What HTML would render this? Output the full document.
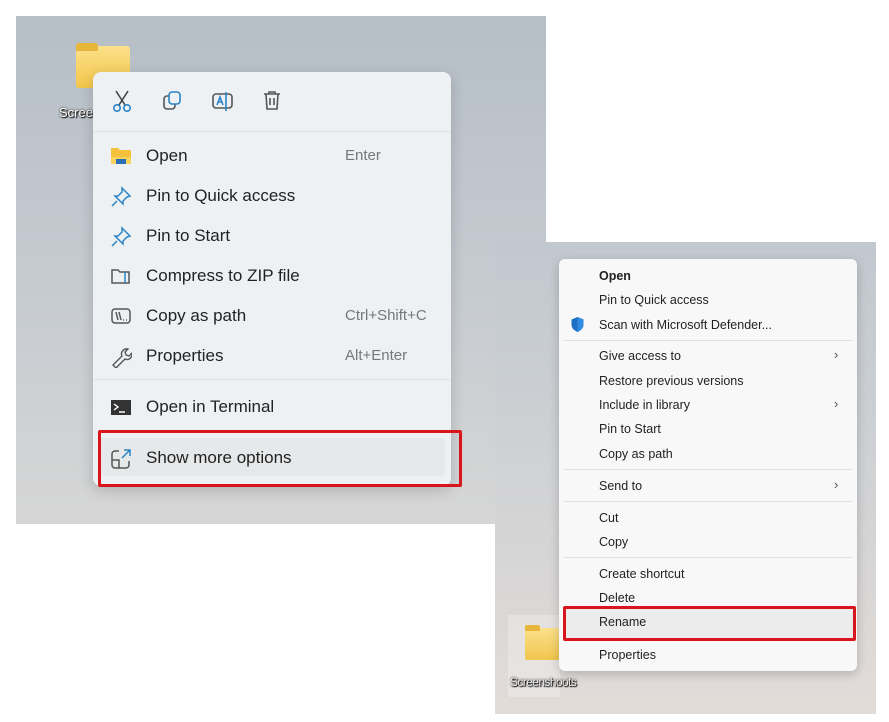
<!DOCTYPE html>
<html><head><meta charset="utf-8"><style>
*{margin:0;padding:0;box-sizing:border-box}
body{width:889px;height:722px;background:#fff;position:relative;overflow:hidden;font-family:"Liberation Sans",sans-serif}
.abs{position:absolute}
#img1{left:16px;top:16px;width:530px;height:508px;background:linear-gradient(180deg,#b6bec6 0%,#c3c9cf 45%,#d6d6d6 100%)}
#m1{left:93px;top:72px;width:358px;height:414px;background:#eef1f4;border-radius:8px;box-shadow:0 4px 14px rgba(0,0,0,.18)}
.r1{position:absolute;left:0;width:358px;height:30px;font-size:17px;color:#222;line-height:30px}
.r1 .t{position:absolute;left:53px}
.r1 .k{position:absolute;left:252px;color:#777;font-size:15px}
.r1 svg{position:absolute;left:17px;top:5px}
#img2{left:495px;top:242px;width:381px;height:472px;background:linear-gradient(180deg,#c1c8cf 0%,#cdd0d3 40%,#e2dcd8 100%)}
#m2{left:559px;top:259px;width:298px;height:412px;background:#f8f8f8;border-radius:6px;box-shadow:0 3px 10px rgba(0,0,0,.2)}
.r2{position:absolute;left:40px;font-size:12.5px;color:#222;line-height:16px}
.ar{position:absolute;left:275px;font-size:13px;color:#555}
.sep{position:absolute;height:1px;background:#e2e2e2}
.red{position:absolute;border:3px solid #d8141c;border-radius:2px}
</style></head><body>
<div id="img1" class="abs">
  <div class="abs" style="left:60px;top:30px;width:54px;height:42px;background:linear-gradient(#fbe18a,#f4c64a);border-radius:3px"></div>
  <div class="abs" style="left:60px;top:27px;width:22px;height:8px;background:#e8b63a;border-radius:3px 3px 0 0"></div>
  <div class="abs" style="left:43px;top:89px;font-size:13px;color:#fff;text-shadow:0 0 2px #000,1px 1px 1px #000">Scree</div>
</div>
<div id="m1" class="abs">
  <svg class="abs" style="left:18px;top:17px" width="22" height="24" viewBox="0 0 22 24" fill="none" stroke-width="1.6"><path d="M5 2l9 14M17 2L8 16" stroke="#444"/><circle cx="6" cy="19" r="3.2" stroke="#2a84c4"/><circle cx="16" cy="19" r="3.2" stroke="#2a84c4"/></svg>
  <svg class="abs" style="left:69px;top:18px" width="22" height="22" viewBox="0 0 22 22" fill="none" stroke-width="1.6"><rect x="2" y="6" width="11" height="13" rx="3" stroke="#555"/><rect x="7" y="2" width="11" height="12" rx="3" stroke="#2a84c4" fill="#eef1f4"/></svg>
  <svg class="abs" style="left:118px;top:18px" width="24" height="24" viewBox="0 0 24 24" fill="none" stroke-width="1.6"><rect x="2" y="4" width="19" height="14" rx="3" stroke="#555"/><path d="M6 15l3-8 3 8M7 12h4" stroke="#2a84c4"/><path d="M15 2v19" stroke="#2a84c4"/></svg>
  <svg class="abs" style="left:168px;top:18px" width="22" height="22" viewBox="0 0 22 22" fill="none" stroke="#555" stroke-width="1.6"><path d="M3 4h16M8 4V2h6v2M5 4l1 15h10l1-15M9 8v7M13 8v7"/></svg>
  <div class="sep" style="left:0;top:59px;width:358px;background:#dde0e3"></div>
  <div class="r1" style="top:69px"><svg width="22" height="20" viewBox="0 0 22 20"><path d="M1 2h7l2 2h11v14H1z" fill="#f4c13d"/><path d="M1 11h20v7H1z" fill="#fbd35a"/><rect x="6" y="13" width="10" height="5" fill="#2a6fb5"/></svg><span class="t">Open</span><span class="k">Enter</span></div>
  <div class="r1" style="top:109px"><svg width="22" height="22" viewBox="0 0 22 22" fill="none" stroke="#2a84c4" stroke-width="1.5"><path d="M12 2l8 8-3 1-4 4 0 3-8-8 3 0 4-4zM7 15l-5 5"/></svg><span class="t">Pin to Quick access</span></div>
  <div class="r1" style="top:149px"><svg width="22" height="22" viewBox="0 0 22 22" fill="none" stroke="#2a84c4" stroke-width="1.5"><path d="M12 2l8 8-3 1-4 4 0 3-8-8 3 0 4-4zM7 15l-5 5"/></svg><span class="t">Pin to Start</span></div>
  <div class="r1" style="top:189px"><svg width="22" height="20" viewBox="0 0 22 20" fill="none" stroke="#555" stroke-width="1.5"><path d="M2 4h6l2 2h9v11H2z"/><path d="M15 6v11" stroke="#2a84c4"/></svg><span class="t">Compress to ZIP file</span></div>
  <div class="r1" style="top:229px"><svg width="22" height="20" viewBox="0 0 22 20" fill="none" stroke="#555" stroke-width="1.5"><rect x="2" y="3" width="18" height="14" rx="3"/><path d="M6 6l2 8M9 6l2 8M13 14h1M16 14h1"/></svg><span class="t">Copy as path</span><span class="k">Ctrl+Shift+C</span></div>
  <div class="r1" style="top:269px"><svg width="22" height="22" viewBox="0 0 22 22" fill="none" stroke="#555" stroke-width="1.4"><path d="M3 19l9-9c-2-4 2-8 6-7l-3 3 1 3 3 1 3-3c1 4-3 8-7 6l-9 9z"/></svg><span class="t">Properties</span><span class="k">Alt+Enter</span></div>
  <div class="sep" style="left:0;top:307px;width:358px;background:#dde0e3"></div>
  <div class="r1" style="top:320px"><svg width="22" height="20" viewBox="0 0 22 20"><rect x="1" y="3" width="20" height="15" fill="#333"/><path d="M4 7l4 3-4 3M9 15h6" stroke="#fff" stroke-width="1.4" fill="none"/></svg><span class="t">Open in Terminal</span></div>
  <div class="abs" style="left:6px;top:366px;width:346px;height:38px;background:#e6e8e9;border-radius:4px"></div>
  <div class="r1" style="top:371px"><svg width="22" height="22" viewBox="0 0 22 22" fill="none" stroke-width="1.5"><path d="M9 3H5a3 3 0 0 0-3 3v11a3 3 0 0 0 3 3h11a3 3 0 0 0 3-3v-4M2 12h7v8" stroke="#555"/><path d="M12 10l8-8M14 2h6v6" stroke="#2a84c4"/></svg><span class="t">Show more options</span></div>
</div>
<div class="red" style="left:98px;top:430px;width:364px;height:57px"></div>

<div id="img2" class="abs">
  <div class="abs" style="left:13px;top:373px;width:52px;height:82px;background:rgba(255,255,255,.25)"></div>
  <div class="abs" style="left:30px;top:386px;width:34px;height:32px;background:linear-gradient(#fbe18a,#f1c54e);border-radius:2px"></div>
  <div class="abs" style="left:30px;top:383px;width:15px;height:6px;background:#e8b63a;border-radius:2px 2px 0 0"></div>
  <div class="abs" style="left:15px;top:433px;font-size:12px;color:#eee;letter-spacing:-.6px;text-shadow:0 0 2px #000,1px 1px 1px #000">Screenshoots</div>
</div>
<div id="m2" class="abs">
  <div class="r2" style="top:9px;font-weight:bold">Open</div>
  <div class="r2" style="top:33px">Pin to Quick access</div>
  <svg class="abs" style="left:11px;top:57px" width="15" height="16" viewBox="0 0 15 16"><path d="M7.5 1l6 2.5v5c0 4-3 6-6 7.5C4.5 14.5 1.5 12.5 1.5 8.5v-5z" fill="#1f6fc4"/><path d="M7.5 1l6 2.5v5c0 4-3 6-6 7.5z" fill="#2f8ae0"/></svg>
  <div class="r2" style="top:58px">Scan with Microsoft Defender...</div>
  <div class="sep" style="left:4px;top:81px;width:290px"></div>
  <div class="r2" style="top:89px">Give access to</div><div class="ar" style="top:88px">›</div>
  <div class="r2" style="top:114px">Restore previous versions</div>
  <div class="r2" style="top:138px">Include in library</div><div class="ar" style="top:137px">›</div>
  <div class="r2" style="top:162px">Pin to Start</div>
  <div class="r2" style="top:187px">Copy as path</div>
  <div class="sep" style="left:4px;top:210px;width:290px"></div>
  <div class="r2" style="top:219px">Send to</div><div class="ar" style="top:218px">›</div>
  <div class="sep" style="left:4px;top:242px;width:290px"></div>
  <div class="r2" style="top:251px">Cut</div>
  <div class="r2" style="top:275px">Copy</div>
  <div class="sep" style="left:4px;top:298px;width:290px"></div>
  <div class="r2" style="top:307px">Create shortcut</div>
  <div class="r2" style="top:331px">Delete</div>
  <div class="abs" style="left:4px;top:348px;width:290px;height:32px;background:#ececec"></div>
  <div class="r2" style="top:355px">Rename</div>
  <div class="r2" style="top:388px">Properties</div>
</div>
<div class="red" style="left:563px;top:606px;width:293px;height:35px"></div>
</body></html>
